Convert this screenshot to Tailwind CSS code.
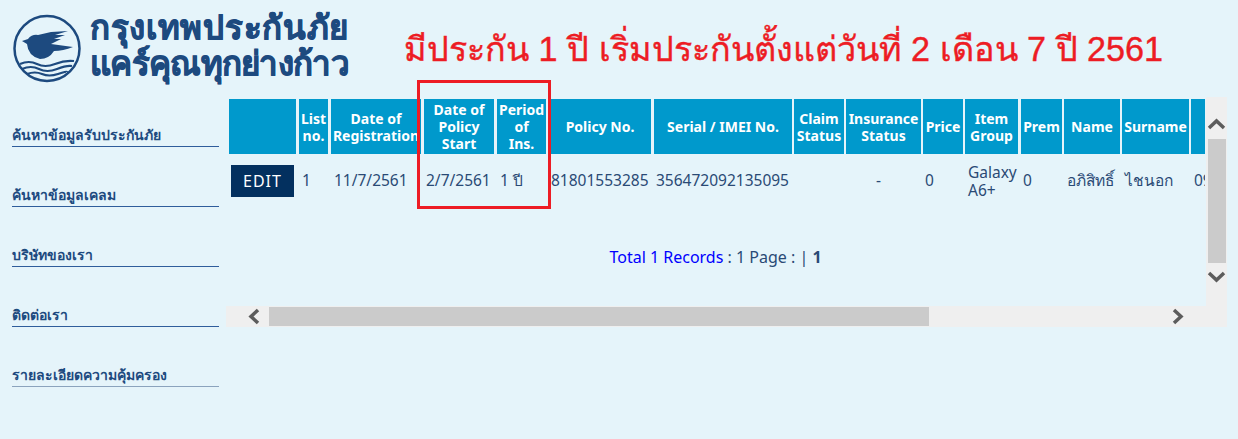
<!DOCTYPE html>
<html lang="en">
<head>
    <meta charset="UTF-8">
    <meta name="viewport" content="width=device-width, initial-scale=1.0">
    <title>Bangkok Insurance</title>
    <script src="https://cdn.jsdelivr.net/npm/@tailwindcss/browser@4"></script>
</head>
<body class="bg-[#e5f4fa] font-['Noto_Sans',sans-serif] text-[#2a4a75] overflow-hidden">
    <div class="relative w-[1238px] h-[439px]">
        <!-- header -->
        <header class="flex h-[97px]">
            <div class="flex pl-[13px] pt-[14px] w-[404px]">
                <svg class="w-[70px] h-[70px] shrink-0" viewBox="0 0 70 70" fill="none">
                    <circle cx="34" cy="34.5" r="32.5" stroke="#1d4a7f" stroke-width="2.5"/>
                    <path d="M9 27 L15 25 Q19 20 25 21 L38 18 L55 17 L42 21 L52 21 L41 25 L48 25 L38 30 L60 33 Q50 37 41 37 Q36 45 27 45 Q15 42 14 30 Z" fill="#1d4a7f"/>
                    <path d="M7 50 Q16 46 24 50 T42 50 T61 47 M9 55 Q18 51 26 55 T44 55 T59 52 M14 60 Q22 57 29 60 T45 60 T54 58" stroke="#1d4a7f" stroke-width="2.2"/>
                </svg>
                <div class="ml-[7px] mt-[-5px] font-bold text-[#1d4a7f] text-[33px] leading-[36px] whitespace-nowrap [-webkit-text-stroke:0.7px_#1d4a7f]">
                    <div class="tracking-[0.7px]">กรุงเทพประกันภัย</div>
                    <div class="tracking-[-0.7px]">แคร์คุณทุกย่างก้าว</div>
                </div>
            </div>
            <h1 class="pt-[24px] font-['Liberation_Sans',sans-serif] font-normal text-[34.200px] leading-[50px] text-[#ed1c24] whitespace-nowrap [-webkit-text-stroke:0.4px_#ed1c24]">มีประกัน 1 ปี เริ่มประกันตั้งแต่วันที่ 2 เดือน 7 ปี 2561</h1>
        </header>

        <div class="flex">
            <!-- side menu -->
            <nav class="w-[226px] shrink-0 pl-[12px] pr-[7px] pt-[25px] flex flex-col gap-[35px] text-[14px] font-bold text-[#1d4a7f]">
                <a class="block h-[25px] leading-[26px] border-b border-[#2f5d9b]">ค้นหาข้อมูลรับประกันภัย</a>
                <a class="block h-[25px] leading-[26px] border-b border-[#2f5d9b]">ค้นหาข้อมูลเคลม</a>
                <a class="block h-[25px] leading-[26px] border-b border-[#2f5d9b]">บริษัทของเรา</a>
                <a class="block h-[25px] leading-[26px] border-b border-[#2f5d9b]">ติดต่อเรา</a>
                <a class="block h-[25px] leading-[26px] border-b border-[#8ba3bd]">รายละเอียดความคุ้มครอง</a>
            </nav>

            <!-- scrollable table area -->
            <div class="w-[1001px] shrink-0">
                <div class="flex h-[209px]">
                    <div class="w-[980px] pl-[3px] pt-[2px] overflow-hidden">
                        <table class="table-fixed border-separate border-spacing-0 w-[976px] text-[15.500px]">
                            <colgroup>
                                <col class="w-[70px]"><col class="w-[32px]"><col class="w-[93px]"><col class="w-[73px]"><col class="w-[52px]"><col class="w-[105px]"><col class="w-[140px]"><col class="w-[52px]"><col class="w-[77px]"><col class="w-[42px]"><col class="w-[56px]"><col class="w-[43px]"><col class="w-[58px]"><col class="w-[69px]"><col class="w-[14px]">
                            </colgroup>
                            <thead class="text-white text-[14px] leading-[17px] font-bold">
                                <tr class="h-[55px]">
                                    <th class="bg-[#0099cc] border-r-[3px] border-[#e5f4fa]"></th>
                                    <th class="bg-[#0099cc] border-r-[3px] border-[#e5f4fa] font-bold">List<br>no.</th>
                                    <th class="bg-[#0099cc] border-r-[3px] border-[#e5f4fa] font-bold whitespace-nowrap overflow-hidden">Date of<br>Registration</th>
                                    <th class="bg-[#0099cc] border-r-[3px] border-[#e5f4fa] font-bold">Date of<br>Policy<br>Start</th>
                                    <th class="bg-[#0099cc] border-r-[3px] border-[#e5f4fa] font-bold">Period<br>of<br>Ins.</th>
                                    <th class="bg-[#0099cc] border-r-[3px] border-[#e5f4fa] font-bold">Policy No.</th>
                                    <th class="bg-[#0099cc] border-r-[2px] border-[#e5f4fa] font-bold">Serial / IMEI No.</th>
                                    <th class="bg-[#0099cc] border-r-[2px] border-[#e5f4fa] font-bold">Claim<br>Status</th>
                                    <th class="bg-[#0099cc] border-r-[2px] border-[#e5f4fa] font-bold">Insurance<br>Status</th>
                                    <th class="bg-[#0099cc] border-r-[2px] border-[#e5f4fa] font-bold">Price</th>
                                    <th class="bg-[#0099cc] border-r-[3px] border-[#e5f4fa] font-bold">Item<br>Group</th>
                                    <th class="bg-[#0099cc] border-r-[2px] border-[#e5f4fa] font-bold">Prem</th>
                                    <th class="bg-[#0099cc] border-r-[2px] border-[#e5f4fa] font-bold">Name</th>
                                    <th class="bg-[#0099cc] border-r-[2px] border-[#e5f4fa] font-bold">Surname</th>
                                    <th class="bg-[#0099cc]"></th>
                                </tr>
                            </thead>
                            <tbody>
                                <tr class="h-[53px] whitespace-nowrap">
                                    <td class="pl-[2px]"><button class="w-[63px] h-[32px] bg-[#03305f] text-white text-[16px] tracking-[1px]">EDIT</button></td>
                                    <td class="pl-[3px]">1</td>
                                    <td class="pl-[3px]">11/7/2561</td>
                                    <td class="pl-[2px]">2/7/2561</td>
                                    <td class="pl-[3px]">1 ปี</td>
                                    <td class="pl-[2px]">81801553285</td>
                                    <td class="pl-[2px]">356472092135095</td>
                                    <td></td>
                                    <td class="text-center pr-[12px]">-</td>
                                    <td class="pl-[2px]">0</td>
                                    <td class="pl-[3px] leading-[18px] whitespace-normal">Galaxy A6+</td>
                                    <td class="pl-[2px]">0</td>
                                    <td class="pl-[3px]">อภิสิทธิ์</td>
                                    <td class="pl-[3px]">ไชนอก</td>
                                    <td class="pl-[3px] overflow-hidden">09</td>
                                </tr>
                            </tbody>
                        </table>
                        <p class="mt-[38px] text-center text-[16px] pr-[4px]"><span class="text-[#0000ff]">Total 1 Records</span> : 1 Page : | <b>1</b></p>
                    </div>
                    <!-- vertical scrollbar -->
                    <div class="w-[21px] bg-[#efefef] flex flex-col items-center">
                        <svg class="w-[21px] h-[42px] shrink-0" viewBox="0 0 21 42"><path d="M3 31 L10.500 24 L18 31" fill="none" stroke="#5c5c5c" stroke-width="3.500"/></svg>
                        <div class="w-[18px] h-[124px] bg-[#cbcbcb]"></div>
                        <svg class="w-[21px] h-[43px] shrink-0" viewBox="0 0 21 43"><path d="M3 10 L10.500 17 L18 10" fill="none" stroke="#5c5c5c" stroke-width="3.500"/></svg>
                    </div>
                </div>
                <!-- horizontal scrollbar -->
                <div class="flex items-center h-[21px] bg-[#efefef]">
                    <svg class="w-[43px] h-[21px] shrink-0" viewBox="0 0 43 21"><path d="M32 4 L25 10.500 L32 17" fill="none" stroke="#5c5c5c" stroke-width="3.500"/></svg>
                    <div class="w-[660px] h-[19px] bg-[#cbcbcb]"></div>
                    <svg class="w-[298px] h-[21px] shrink-0" viewBox="0 0 298 21"><path d="M245 4 L252 10.500 L245 17" fill="none" stroke="#5c5c5c" stroke-width="3.500"/></svg>
                </div>
            </div>
        </div>

        <!-- red highlight drawn on top of the table -->
        <div class="absolute left-[417px] top-[80px] w-[134px] h-[129px] border-[3px] border-[#ed1c24]"></div>
    </div>
</body>
</html>
